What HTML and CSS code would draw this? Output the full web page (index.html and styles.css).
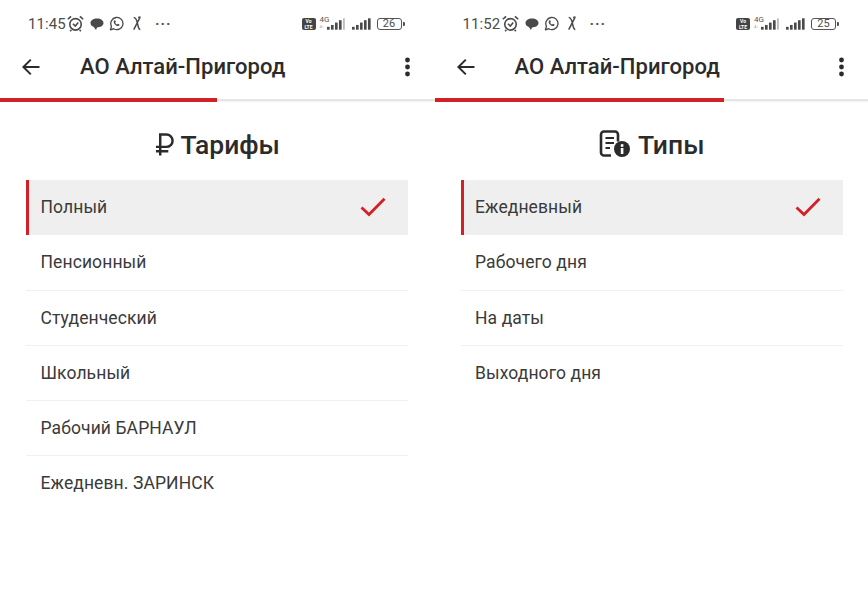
FILE: index.html
```html
<!DOCTYPE html>
<html lang="ru">
<head>
<meta charset="utf-8">
<title>АО Алтай-Пригород</title>
<link rel="stylesheet" href="styles.css">
</head>
<body>
<svg class="defs" width="0" height="0" aria-hidden="true">
  <defs>
    <symbol id="i-alarm" viewBox="0 0 16 16">
      <circle cx="8" cy="8.800" r="5.400" fill="none" stroke="currentColor" stroke-width="1.500"/>
      <path d="M5.600 8.200 7.800 10.400 10.600 7" fill="none" stroke="currentColor" stroke-width="1.400"/>
      <path d="M.8 4 3.800 1.200M15.200 4 12.200 1.200M4 14 3 15.400M12 14l1 1.400" fill="none" stroke="currentColor" stroke-width="1.600"/>
    </symbol>
    <symbol id="i-chat" viewBox="0 0 14 14">
      <path d="M7 1.500C3.200 1.500.5 3.400.5 6c0 1.900 1.300 3.300 3.300 4L6 13l1-2.600c3.600 0 6.500-1.900 6.500-4.400S10.800 1.500 7 1.500Z" fill="currentColor"/>
    </symbol>
    <symbol id="i-wa" viewBox="0 0 16 16">
      <path d="M1.500 14.700 2.600 11A6.500 6.500 0 1 1 5 13.600Z" fill="none" stroke="currentColor" stroke-width="1.400" stroke-linejoin="round"/>
      <path d="M5.500 4.700c-1 1-.5 3 .9 4.400s3.400 2.200 4.400 1.300l.4-1.300-1.700-.9-.8.800C7.700 8.600 7.100 8 6.600 6.800l.7-.8-.7-1.500Z" fill="currentColor"/>
    </symbol>
    <symbol id="i-x" viewBox="0 0 10 16">
      <path d="M1.500 1.500C3.500 1.500 4.500 3 5.500 8s1.500 6.500 3 6.500M8.500 1 1.500 14.500M6.200 1.500 8.800 1" fill="none" stroke="currentColor" stroke-width="1.600"/>
    </symbol>
    <symbol id="i-signal" viewBox="0 0 20 12">
      <rect x="0" y="9" width="2.800" height="3" fill="currentColor"/>
      <rect x="4.200" y="7" width="2.800" height="5" fill="currentColor"/>
      <rect x="8.400" y="4.500" width="2.800" height="7.500" fill="currentColor"/>
      <rect x="12.600" y="2" width="2.800" height="10" fill="currentColor"/>
      <rect x="16.800" y="0" width="2" height="12" fill="#bdbdbd"/>
    </symbol>
    <symbol id="i-signal-full" viewBox="0 0 20 12">
      <rect x="0" y="9" width="2.800" height="3" fill="currentColor"/>
      <rect x="4.200" y="7" width="2.800" height="5" fill="currentColor"/>
      <rect x="8.400" y="4.500" width="2.800" height="7.500" fill="currentColor"/>
      <rect x="12.600" y="2" width="2.800" height="10" fill="currentColor"/>
      <rect x="16.800" y="0" width="2.800" height="12" fill="currentColor"/>
    </symbol>
    <symbol id="i-back" viewBox="0 0 20 18">
      <path d="M18.500 9H2.500M9.800 1.600 2.400 9l7.400 7.400" fill="none" stroke="currentColor" stroke-width="2"/>
    </symbol>
    <symbol id="i-more" viewBox="0 0 6 20">
      <circle cx="3" cy="3" r="2.400" fill="currentColor"/>
      <circle cx="3" cy="10" r="2.400" fill="currentColor"/>
      <circle cx="3" cy="17" r="2.400" fill="currentColor"/>
    </symbol>
    <symbol id="i-check" viewBox="0 0 26 20">
      <path d="M1.500 10.500 9 17.500 24.500 1.800" fill="none" stroke="currentColor" stroke-width="2.800"/>
    </symbol>
    <symbol id="i-ruble" viewBox="0 0 20 26">
      <path d="M5.500 24.500V2.500h6.500a6.500 6.500 0 0 1 0 13H1M1 20h13" fill="none" stroke="currentColor" stroke-width="2.600"/>
    </symbol>
    <symbol id="i-doc" viewBox="0 0 32 28">
      <path d="M12 25.500H5a3 3 0 0 1-3-3V4.500a3 3 0 0 1 3-3h11a3 3 0 0 1 3 3v7" fill="none" stroke="currentColor" stroke-width="2.600"/>
      <path d="M6.500 8H15M6.500 13H15M6.500 18H11" fill="none" stroke="currentColor" stroke-width="2.200"/>
      <circle cx="23" cy="19" r="8" fill="currentColor"/>
      <rect x="21.800" y="18" width="2.600" height="6" fill="#fff"/>
      <rect x="21.800" y="14.200" width="2.600" height="2.600" fill="#fff"/>
    </symbol>
  </defs>
</svg>
<main class="screens">
  <section class="screen">
    <div class="status">
      <span class="time">11:45</span>
      <svg class="st st-alarm"><use href="#i-alarm"/></svg>
      <svg class="st st-chat"><use href="#i-chat"/></svg>
      <svg class="st st-wa"><use href="#i-wa"/></svg>
      <svg class="st st-x"><use href="#i-x"/></svg>
      <span class="dots">···</span>
      <span class="spacer"></span>
      <span class="volte">Vo<br>LTE</span>
      <span class="net"><span class="net-top">4G</span><span class="net-sub">4↑</span></span>
      <svg class="st st-signal"><use href="#i-signal"/></svg>
      <svg class="st st-signal2"><use href="#i-signal-full"/></svg>
      <span class="battery"><span class="battery-num">26</span></span>
    </div>
    <header class="bar">
      <svg class="back"><use href="#i-back"/></svg>
      <h1 class="title">АО Алтай-Пригород</h1>
      <svg class="more"><use href="#i-more"/></svg>
    </header>
    <div class="progress"><div class="progress-fill half"></div></div>
    <h2 class="heading"><svg class="h-ruble"><use href="#i-ruble"/></svg>Тарифы</h2>
    <ul class="list">
      <li class="item active">Полный<svg class="check"><use href="#i-check"/></svg></li>
      <li class="item">Пенсионный</li>
      <li class="item">Студенческий</li>
      <li class="item">Школьный</li>
      <li class="item">Рабочий БАРНАУЛ</li>
      <li class="item">Ежедневн. ЗАРИНСК</li>
    </ul>
  </section>
  <section class="screen">
    <div class="status">
      <span class="time">11:52</span>
      <svg class="st st-alarm"><use href="#i-alarm"/></svg>
      <svg class="st st-chat"><use href="#i-chat"/></svg>
      <svg class="st st-wa"><use href="#i-wa"/></svg>
      <svg class="st st-x"><use href="#i-x"/></svg>
      <span class="dots">···</span>
      <span class="spacer"></span>
      <span class="volte">Vo<br>LTE</span>
      <span class="net"><span class="net-top">4G</span><span class="net-sub">4↑</span></span>
      <svg class="st st-signal"><use href="#i-signal"/></svg>
      <svg class="st st-signal2"><use href="#i-signal-full"/></svg>
      <span class="battery"><span class="battery-num">25</span></span>
    </div>
    <header class="bar">
      <svg class="back"><use href="#i-back"/></svg>
      <h1 class="title">АО Алтай-Пригород</h1>
      <svg class="more"><use href="#i-more"/></svg>
    </header>
    <div class="progress"><div class="progress-fill twothirds"></div></div>
    <h2 class="heading"><svg class="h-doc"><use href="#i-doc"/></svg>Типы</h2>
    <ul class="list">
      <li class="item active">Ежедневный<svg class="check"><use href="#i-check"/></svg></li>
      <li class="item">Рабочего дня</li>
      <li class="item">На даты</li>
      <li class="item">Выходного дня</li>
    </ul>
  </section>
</main>
</body>
</html>
```

FILE: styles.css
```css
* { box-sizing: border-box; }
html, body { margin: 0; padding: 0; background: #fff; }
body { font-family: Roboto, "Noto Sans", sans-serif; color: #2b2b2b; width: 868px; height: 589px; overflow: hidden; }
.defs { position: absolute; }
.screens { display: grid; grid-template-columns: 434.5px 434.5px; height: 589px; }
.screen { min-width: 0; }

.status { height: 45px; padding: 2px 33px 0 28px; display: flex; align-items: center; color: #4a4a4a; }
.time { font-size: 15px; letter-spacing: .1px; color: #4d4d4d; width: 39px; }
.st { display: block; flex: none; }
.st-alarm { width: 17px; height: 17px; margin-left: 0; }
.st-chat { width: 14px; height: 14px; margin-left: 6px; }
.st-wa { width: 15px; height: 15px; margin-left: 5px; }
.st-x { width: 10px; height: 15px; margin-left: 8px; }
.dots { font-size: 15px; font-weight: 700; letter-spacing: 1px; margin-left: 13px; color: #555; }
.spacer { flex: 1; }
.volte { width: 14px; height: 12px; border-radius: 2px; background: #444; color: #fff; font-size: 5px; line-height: 6px; text-align: center; font-weight: 700; }
.net { width: 7px; margin-left: 4px; display: flex; flex-direction: column; margin-top: -3px; color: #555; }
.net-top { font-size: 8px; line-height: 8px; white-space: nowrap; }
.net-sub { font-size: 4px; line-height: 5px; color: #999; white-space: nowrap; }
.st-signal { width: 19px; height: 12px; margin-left: 0; }
.st-signal2 { width: 19px; height: 12px; margin-left: 6px; }
.battery { position: relative; width: 25px; height: 12px; margin-left: 6px; border: 1px solid #555; border-radius: 3px; display: flex; align-items: center; justify-content: center; }
.battery::after { content: ""; position: absolute; right: -4px; top: 3px; width: 2px; height: 4px; background: #555; border-radius: 0 1px 1px 0; }
.battery-num { font-size: 11px; line-height: 10px; color: #4d4d4d; }

.bar { height: 53px; display: flex; align-items: center; padding: 0 24px 9px 21px; }
.back { width: 20px; height: 18px; color: #2b2b2b; flex: none; }
.title { flex: 1; margin: 0 0 0 39px; font-size: 22px; font-weight: 500; line-height: 28px; color: #2b2b2b; letter-spacing: .03px; }
.more { width: 7px; height: 20px; color: #2b2b2b; flex: none; }

.progress { height: 4px; background: linear-gradient(#fff 0 1px, #e6e6e6 1px 3px, #f4f4f4 3px); }
.progress-fill { height: 4px; background: #d32026; }
.half { width: 217px; }
.twothirds { width: 289.500px; }

.heading { margin: 0; height: 78px; padding-top: 6px; display: flex; align-items: center; justify-content: center; font-size: 26.500px; font-weight: 500; color: #2b2b2b; gap: 7px; }
.h-ruble { width: 19px; height: 25px; }
.h-doc { width: 32px; height: 28px; }

.list { list-style: none; margin: 0 0 0 26px; padding: 0; width: 382px; }
.item { height: 55px; display: flex; align-items: center; justify-content: space-between; padding: 0 22px 0 14.500px; font-size: 17.500px; color: #3a3a3a; border-bottom: 1px solid #f1f1f1; letter-spacing: .1px; }
.item:nth-child(2) { height: 56px; padding-bottom: 2px; }
.item:last-child { border-bottom: 0; padding-bottom: 2px; }
.item.active { background: #efefef; border-bottom: 0; border-left: 3px solid #d32026; padding-left: 11.500px; padding-bottom: 2px; }
.check { width: 26px; height: 20px; color: #d32026; flex: none; }
```
